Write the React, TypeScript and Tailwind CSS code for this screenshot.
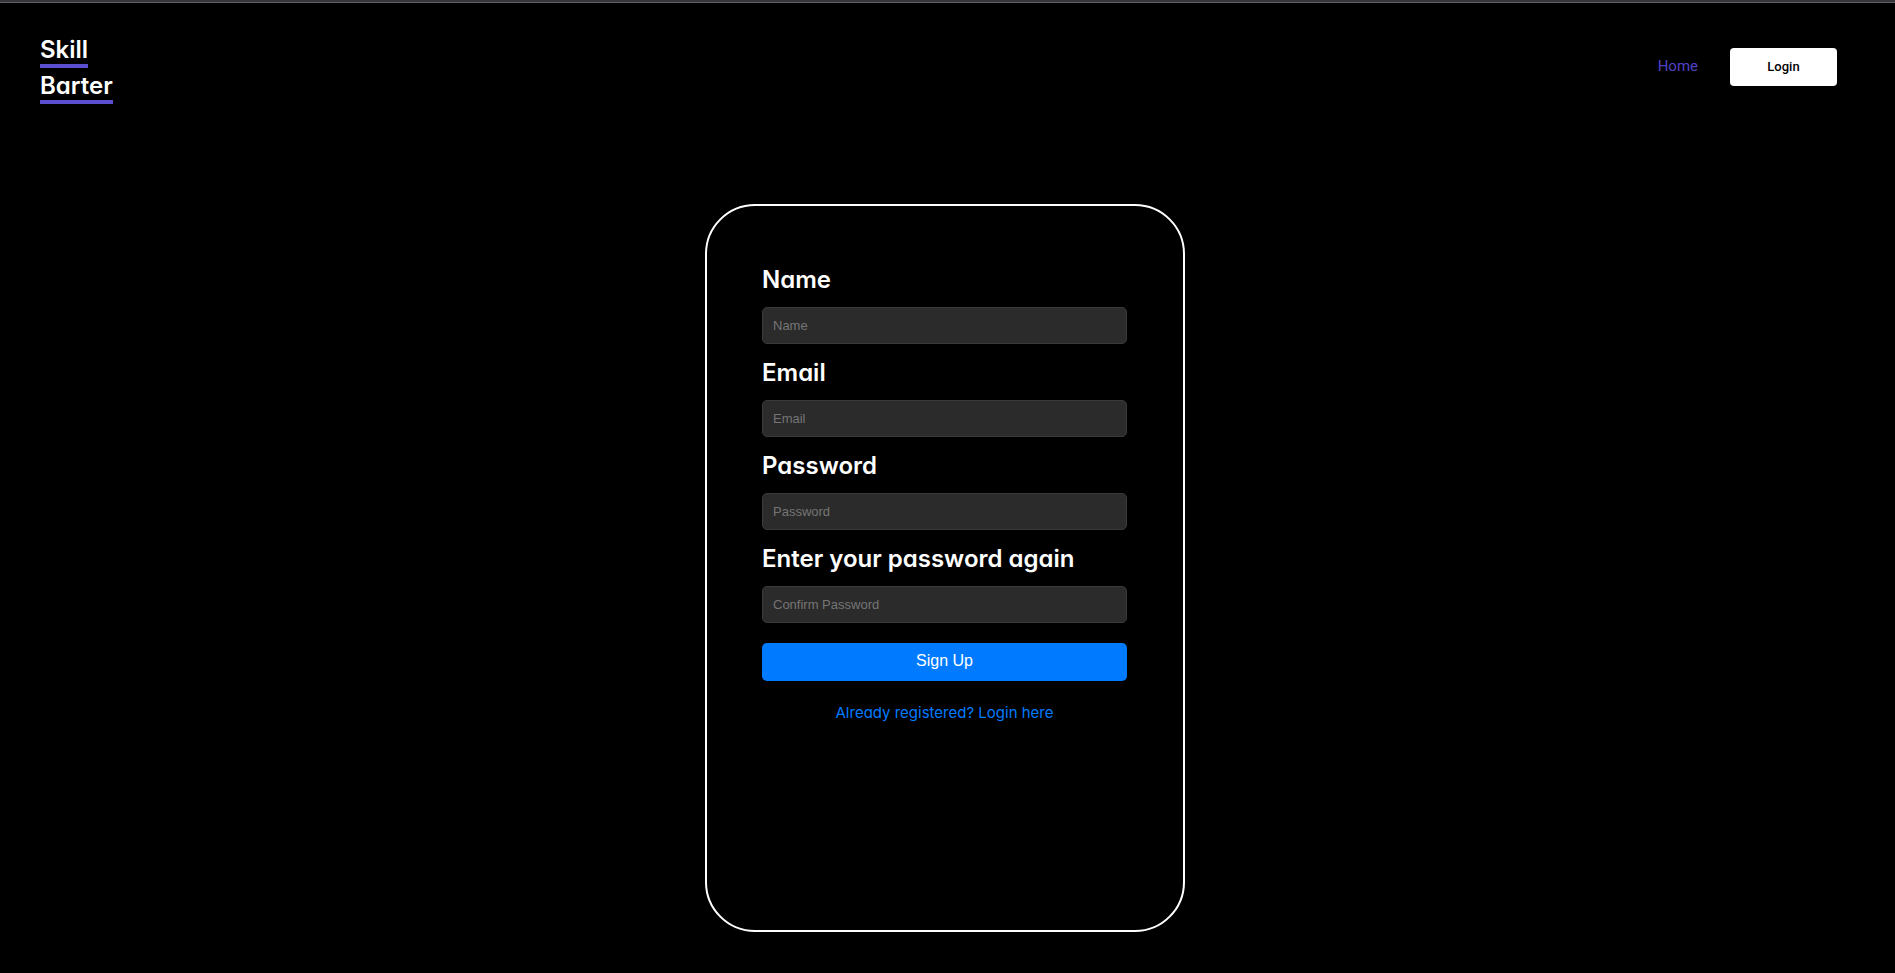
const fields = [
  { id: "name", label: "Name", type: "text", placeholder: "Name" },
  { id: "email", label: "Email", type: "email", placeholder: "Email" },
  { id: "password", label: "Password", type: "password", placeholder: "Password" },
  {
    id: "confirm",
    label: "Enter your password again",
    type: "password",
    placeholder: "Confirm Password",
  },
];

function Header() {
  return (
    <header className="flex items-start justify-between pt-[29px] pr-[58px] pl-10">
      <a
        href="#"
        className="flex flex-col items-start text-2xl leading-7 font-semibold text-white [font-feature-settings:'cv11']"
      >
        <span className="border-b-4 border-[#5b4fcf] pt-1">Skill</span>
        <span className="border-b-4 border-[#5b4fcf] pt-1">Barter</span>
      </a>
      <nav className="mt-4 flex items-center gap-8 font-['Roboto',sans-serif]">
        <a href="#" className="pb-0.5 text-[15px] leading-6 text-[#4f43c4]">
          Home
        </a>
        <button
          type="button"
          className="h-[38px] w-[107px] rounded bg-white text-[13px] font-medium text-black"
        >
          Login
        </button>
      </nav>
    </header>
  );
}

function SignUpForm() {
  return (
    <form
      className="min-h-[728px] w-full max-w-[480px] rounded-[50px] border-2 border-white pt-[58px] pr-14 pl-[55px]"
      onSubmit={(e) => e.preventDefault()}
    >
      <div className="flex flex-col gap-[13px]">
        {fields.map((f) => (
          <div key={f.id} className="flex flex-col gap-[11px]">
            <label
              htmlFor={f.id}
              className="text-2xl leading-8 font-semibold text-white [font-feature-settings:'cv11']"
            >
              {f.label}
            </label>
            <input
              id={f.id}
              type={f.type}
              placeholder={f.placeholder}
              className="h-[37px] w-full rounded-[5px] border border-[#3a3a3a] bg-[#2b2b2b] px-2.5 font-['Liberation_Sans',sans-serif] text-[13px] text-white placeholder:text-[#757575]"
            />
          </div>
        ))}
      </div>
      <button
        type="submit"
        className="mt-5 h-[38px] w-full rounded-[5px] bg-[#007bff] pb-0.5 font-['Liberation_Sans',sans-serif] text-base text-white"
      >
        Sign Up
      </button>
      <p className="mt-5 text-center text-[15px] leading-6">
        <a href="#" className="text-[#007bff] [font-feature-settings:'cv11']">
          Already registered? Login here
        </a>
      </p>
    </form>
  );
}

export default function App() {
  return (
    <div className="min-h-screen bg-black font-['Inter',sans-serif]">
      <div className="h-[3px] border-b border-[#5f6064] bg-[#35363a]" />
      <Header />
      <main className="mt-[100px] flex justify-center pr-[5px] pb-8">
        <SignUpForm />
      </main>
    </div>
  );
}
